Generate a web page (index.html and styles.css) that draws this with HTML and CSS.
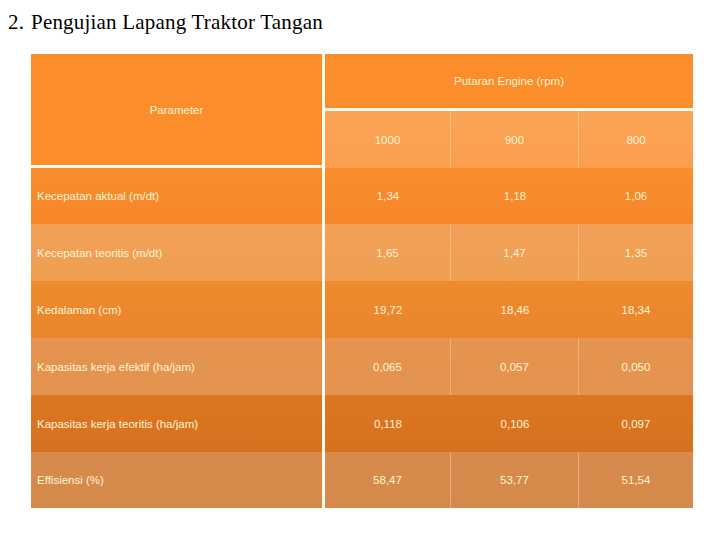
FILE: index.html
```html
<!DOCTYPE html>
<html>
<head>
<meta charset="utf-8">
<link rel="stylesheet" href="styles.css">
</head>
<body>
<h1 class="title"><span class="num">2.</span>Pengujian Lapang Traktor Tangan</h1>
<div class="table">
  <div class="cell param">Parameter</div>
  <div class="cell group">Putaran Engine (rpm)</div>
  <div class="cell sub c1">1000</div>
  <div class="cell sub c2">900</div>
  <div class="cell sub c3">800</div>

  <div class="cell name r1">Kecepatan aktual (m/dt)</div>
  <div class="cell val r1">1,34</div>
  <div class="cell val r1">1,18</div>
  <div class="cell val r1">1,06</div>

  <div class="cell name r2">Kecepatan teoritis (m/dt)</div>
  <div class="cell val r2 div">1,65</div>
  <div class="cell val r2 div">1,47</div>
  <div class="cell val r2">1,35</div>

  <div class="cell name r3">Kedalaman (cm)</div>
  <div class="cell val r3">19,72</div>
  <div class="cell val r3">18,46</div>
  <div class="cell val r3">18,34</div>

  <div class="cell name r4">Kapasitas kerja efektif (ha/jam)</div>
  <div class="cell val r4 div">0,065</div>
  <div class="cell val r4 div">0,057</div>
  <div class="cell val r4">0,050</div>

  <div class="cell name r5">Kapasitas kerja teoritis (ha/jam)</div>
  <div class="cell val r5">0,118</div>
  <div class="cell val r5">0,106</div>
  <div class="cell val r5">0,097</div>

  <div class="cell name r6">Effisiensi (%)</div>
  <div class="cell val r6 div">58,47</div>
  <div class="cell val r6 div">53,77</div>
  <div class="cell val r6">51,54</div>
</div>
</body>
</html>
```
FILE: styles.css
```css
html, body {
  margin: 0;
  padding: 0;
  background: #ffffff;
}

body {
  width: 720px;
  height: 540px;
  overflow: hidden;
}

.title {
  margin: 0;
  padding: 10px 0 0 8px;
  height: 44px;
  box-sizing: border-box;
  font-family: "Liberation Serif", serif;
  font-weight: normal;
  font-size: 21px;
  letter-spacing: 0.2px;
  line-height: 24px;
  color: #000;
}

.num {
  display: inline-block;
  width: 23px;
}

.table {
  margin: 10px 0 0 31px;
  display: grid;
  grid-template-columns: 294px 126px 128px 114px;
  grid-template-rows: 57px 57px 56px 57px 57px 57px 57px 56px;
  font-family: "Liberation Sans", Arial, sans-serif;
  font-size: 11.5px;
  color: #fff4d4;
}

.cell {
  display: flex;
  align-items: center;
  box-sizing: border-box;
}

.param {
  grid-row: 1 / span 2;
  grid-column: 1;
  justify-content: center;
  background: #fb8e2b;
  border-right: 3px solid #fffaf0;
  border-bottom: 3px solid #fffaf0;
}

.group {
  grid-row: 1;
  grid-column: 2 / span 3;
  justify-content: center;
  background: #fb8e2b;
  border-bottom: 3px solid #fffaf0;
}

.sub {
  grid-row: 2;
  justify-content: center;
  background: linear-gradient(#fca456, #fb9f4e);
}

.c1, .c2 {
  border-right: 1px solid rgba(255, 220, 170, 0.45);
}

.name {
  padding-left: 6px;
  border-right: 3px solid #fffaf0;
}

.val {
  justify-content: center;
}

.div {
  border-right: 1px solid rgba(255, 215, 170, 0.45);
}

.r1 { background: linear-gradient(#fa8d2e, #f5872a); }
.r2 { background: linear-gradient(#f29f57, #eea051); }
.r3 { background: linear-gradient(#ef8a2e, #e9852c); }
.r4 { background: linear-gradient(#e6944f, #e39350); }
.r5 { background: linear-gradient(#dc7622, #d6711f); }
.r6 { background: linear-gradient(#d68a4c, #d58a4b); }
```
